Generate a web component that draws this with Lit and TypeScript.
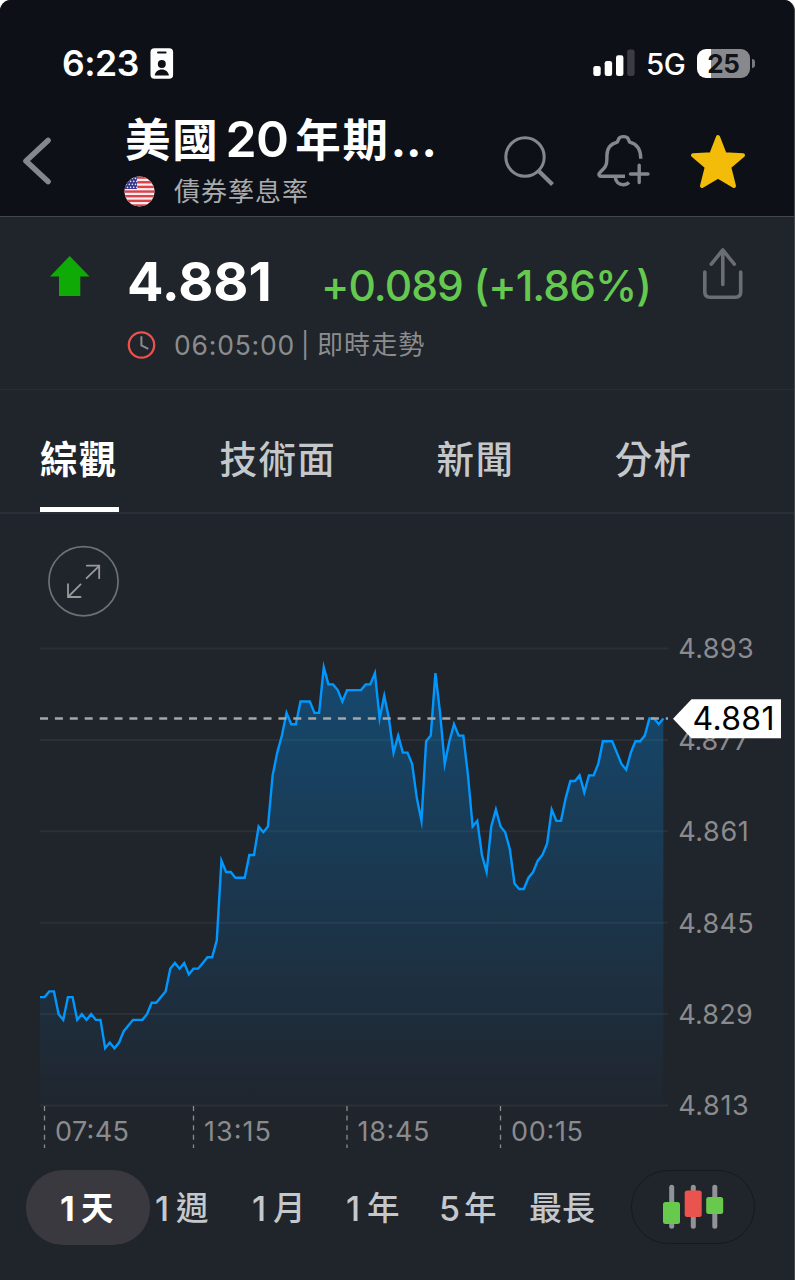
import { LitElement, html, svg, css } from "lit";
import { customElement, state } from "lit/decorators.js";
import { classMap } from "lit/directives/class-map.js";

// One sample per step, in thousandths above 4.813
const SAMPLES = [
  19, 19, 20, 20, 16, 15, 19, 19, 15, 16, 15, 16, 15, 15, 10, 11, 10, 11, 13, 14, 15, 15, 15, 16, 18, 18, 19, 20, 24,
  25, 24, 25, 23, 24, 24, 25, 26, 26, 29, 43, 41, 41, 40, 40, 40, 44, 44, 49, 48, 49, 58, 62, 65, 69, 67, 67, 71, 71,
  71, 69, 69, 77, 74, 74, 73, 71, 73, 73, 73, 73, 74, 74, 76, 68, 72, 68, 62, 65, 62, 62, 60, 54, 50, 64, 65, 76, 69,
  60, 64, 67, 65, 65, 58, 49, 50, 44, 41, 49, 52, 49, 48, 45, 39, 38, 38, 40, 41, 43, 44, 46, 52, 50, 50, 54, 57, 57,
  58, 55, 58, 58, 60, 64, 64, 64, 62, 60, 59, 62, 64, 64, 65, 68, 68, 67, 68,
];

const PLOT_LEFT = 40;
const STEP = 4.652;
const BASE_Y = 591.1;
const UNIT = 5.685;

@customElement("price-chart")
export class PriceChart extends LitElement {
  static styles = css`
    :host { display: block; }
    .chart { display: block; }
    .axis { font: 400 27px Inter, "Liberation Sans", sans-serif; fill: #8b8b8d; }
    .current { font: 400 32px Inter, "Liberation Sans", sans-serif; fill: #000; }
  `;

  render() {
    const pts = SAMPLES.map((k, i) => `${(PLOT_LEFT + i * STEP).toFixed(2)},${(BASE_Y - k * UNIT).toFixed(2)}`);
    const end = (PLOT_LEFT + (SAMPLES.length - 1) * STEP).toFixed(2);
    const levels: [string, number, number][] = [
      ["4.893", 134.5, 75.5], ["4.877", 226, 70.5], ["4.861", 317.2, 70.5],
      ["4.845", 408.8, 75.5], ["4.829", 500, 74.5], ["4.813", 591.5, 70.5],
    ];
    const times: [string, number, number][] = [
      ["07:45", 44.5, 74], ["13:15", 193.5, 67], ["18:45", 347, 72], ["00:15", 500.5, 72],
    ];
    return html`
      <svg class="chart" width="795" height="650" viewBox="0 0 795 650">
        <defs>
          <linearGradient id="area" x1="0" y1="147" x2="0" y2="591" gradientUnits="userSpaceOnUse">
            <stop offset="0" stop-color="#0090f0" stop-opacity="0.35" />
            <stop offset="1" stop-color="#0090f0" stop-opacity="0.015" />
          </linearGradient>
        </defs>
        <g fill="none" stroke="#6d7074" stroke-width="1.7">
          <circle cx="83.5" cy="67.2" r="34.6" />
          <g stroke="#98999b" stroke-width="1.8" stroke-linecap="round">
            <path d="M86.6 64.2 99.3 51.8M86.8 51.7H99.2V64.2" />
            <path d="M80.6 70.4 68 83M68 70.2V83H80.5" />
          </g>
        </g>
        ${levels.map(([, y]) => svg`<path d="M40 ${y}H668" stroke="#2b2f36" stroke-width="2" />`)}
        <polygon points="${PLOT_LEFT},591 ${pts.join(" ")} ${end},591" fill="url(#area)" />
        <polyline points=${pts.join(" ")} fill="none" stroke="#0098ff" stroke-width="2.4" stroke-miterlimit="10" />
        <path d="M40 204.4H668" stroke="#a4a6a7" stroke-width="2.5" stroke-dasharray="8 6.9" />
        ${levels.map(
          ([t, y, w]) => svg`<text class="axis" x="678.2" y=${y + 9.8} textLength=${w} lengthAdjust="spacing">${t}</text>`
        )}
        ${times.map(
          ([t, x, w]) => svg`
            <path d="M${x} 592V634" stroke="#8b8b8d" stroke-width="1.3" stroke-dasharray="5 4.6" />
            <text class="axis" x=${x + 10.5} y="627" textLength=${w} lengthAdjust="spacing">${t}</text>`
        )}
        <path d="M673 204.7 691.5 185.3H781V224.3H691.5Z" fill="#fff" />
        <text class="current" x="692.5" y="215.6" textLength="82" lengthAdjust="spacing">4.881</text>
      </svg>
    `;
  }
}

@customElement("app-root")
export class AppRoot extends LitElement {
  @state() private tab = 0;
  @state() private range = 0;

  static styles = css`
    :host {
      display: block;
      width: 795px;
      height: 1280px;
      overflow: hidden;
      background: #fff;
      font-family: Inter, "Noto Sans CJK TC", sans-serif;
      color: #fff;
    }
    * { box-sizing: border-box; }
    svg { display: block; flex: none; }
    .screen {
      display: flex;
      flex-direction: column;
      height: 1280px;
      border-radius: 11px 11px 0 0;
      overflow: hidden;
      background: #20242b;
      border-right: 1px solid #45484c;
    }
    .head { height: 217px; background: #0d1017; border-bottom: 1px solid #44474b; }
    .status { display: flex; align-items: center; height: 64px; padding: 0 39px 0 62px; margin-top: 31px; }
    .clock { font-size: 35.5px; font-weight: 600; line-height: 40px; letter-spacing: -0.5px; width: 88px; margin-top: 1px; white-space: nowrap; }
    .push { margin-left: auto; }
    .net { font-size: 29.5px; font-weight: 500; line-height: 40px; letter-spacing: -0.5px; margin: 2px 0 0 11px; width: 51px; white-space: nowrap; }
    .battery { display: flex; align-items: center; }
    .cell {
      width: 53px; height: 29px; border-radius: 9px; color: #101319;
      background: linear-gradient(90deg, #fff 14px, #88898c 14px);
      font-size: 26px; font-weight: 700; line-height: 30px; text-align: center; letter-spacing: -0.3px;
    }
    .nub { width: 3px; height: 9px; margin-left: 2px; border-radius: 0 4px 4px 0; background: #77797c; }
    .nav { display: flex; height: 121px; padding-left: 23px; }
    .back { margin-top: 42px; }
    .names { flex: none; width: 330px; margin-left: 73px; }
    .title { display: flex; align-items: baseline; height: 64px; font-size: 45.5px; font-weight: 700; line-height: 64px; margin-top: 12px; white-space: nowrap; padding-left: 1px; }
    .t-cjk { letter-spacing: 1.8px; }
    .t-num { font-size: 50px; font-weight: 600; letter-spacing: -0.8px; margin: 0 7px 0 6px; }
    .t-dots { font-size: 46px; letter-spacing: 0; margin-left: 1px; }
    .subtitle { display: flex; align-items: center; gap: 19px; height: 36px; margin-top: 2px; }
    .kind { font-size: 26px; line-height: 36px; letter-spacing: 1px; color: #a9abad; font-weight: 400; padding-top: 1px; }
    .search { margin: 40px 0 0 50px; }
    .bell { margin: 38px 0 0 42px; }
    .star { margin: 38px 0 0 40px; }
    .quote { height: 173px; border-bottom: 1px solid #282c33; padding: 0 50px 0 50px; }
    .price-row { display: flex; height: 99px; }
    .up { margin-top: 39px; }
    .price { font-size: 54px; font-weight: 700; line-height: 60px; margin: 35px 0 0 37px; width: 194px; letter-spacing: 0; white-space: nowrap; }
    .change { font-size: 42.5px; font-weight: 500; line-height: 60px; color: #65c950; margin-top: 39px; width: 381px; letter-spacing: -0.9px; white-space: nowrap; }
    .share { margin-top: 29px; }
    .time-row { display: flex; align-items: center; height: 58px; padding-left: 77px; }
    .time { font-size: 26.5px; color: #8b8c8e; margin-left: 18px; line-height: 36px; display: flex; white-space: nowrap; }
    .digits { letter-spacing: 0.8px; width: 127px; }
    .bar { width: 16px; font-size: 25px; }
    .live { font-size: 26px; letter-spacing: 1.1px; }
    .tabs { display: flex; height: 124px; padding-left: 40px; border-bottom: 2px solid #2a2e36; }
    .tab {
      display: block; font: inherit; background: none; border: 0; border-bottom: 5px solid transparent; padding: 0; color: #c5c8cb;
      font-size: 37.5px; font-weight: 500; line-height: 139px; height: 122px; letter-spacing: 1.3px;
      text-align: left; white-space: nowrap;
    }
    .label { display: block; height: 117px; overflow: hidden; }
    .tab.on { color: #fff; font-weight: 700; border-bottom-color: #fff; width: 79px; }
    .tab + .tab { margin-left: 100.6px; }
    .ranges { display: flex; margin-top: 6px; height: 75px; padding-left: 26px; }
    .range {
      font: inherit; background: none; border: 0; padding: 0; color: #c5c8cb;
      font-size: 33px; font-weight: 500; line-height: 77px; height: 75px; white-space: nowrap;
      display: flex; gap: 5px; text-align: left;
    }
    .range.on { color: #fff; font-weight: 700; background: #39393f; border-radius: 37px; }
    .u { font-size: 32.5px; }
    .n { width: 16px; font-size: 34px; }
    .n5 { width: 22px; font-size: 34px; }
    .r0 { width: 124px; padding-left: 34px; }
    .r1 { width: 96px; padding-left: 5px; }
    .r2 { width: 94px; padding-left: 6px; }
    .r3 { width: 94px; padding-left: 6px; }
    .r4 { width: 95px; padding-left: 5px; gap: 3px; }
    .r5 { width: 102px; padding-left: 0; }
    .candles { font: inherit; background: none; padding: 0; width: 124px; height: 74px; border: 1px solid #17191d; border-radius: 37px; display: flex; justify-content: center; align-items: center; }
  `;

  private tabs = ["綜觀", "技術面", "新聞", "分析"];
  private ranges = [["1", "天"], ["1", "週"], ["1", "月"], ["1", "年"], ["5", "年"], ["", "最長"]];

  private flag() {
    return html`<svg width="31" height="31" viewBox="0 0 31 31">
      <defs><clipPath id="disc"><circle cx="15.5" cy="15.5" r="15" /></clipPath></defs>
      <g clip-path="url(#disc)">
        <rect width="31" height="31" fill="#f6eeee" />
        ${[0, 1, 2, 3, 4, 5, 6].map((i) => svg`<rect y=${0.4 + i * 4.65} width="31" height="2.4" fill="#dc4048" />`)}
        <rect width="13" height="13" fill="#35388d" />
        ${[0, 1, 2, 3].map((r) =>
          [0, 1, 2, 3].map((c) => svg`<circle cx=${2.2 + c * 3.1 + (r % 2) * 1.3} cy=${2.4 + r * 3} r="0.8" fill="#e2e2f2" />`)
        )}
      </g>
    </svg>`;
  }

  render() {
    return html`
      <div class="screen">
        <header class="head">
          <div class="status">
            <span class="clock">6:23</span>
            <svg width="24" height="31" viewBox="0 0 24 31">
              <rect x="0.5" y="0.3" width="22.6" height="30.4" rx="4" fill="#fff" />
              <rect x="7" y="3.4" width="9.6" height="2.2" rx="1.1" fill="#0d1017" />
              <circle cx="11.8" cy="16" r="4" fill="#0d1017" />
              <path d="M4.7 27.5C5.3 23.8 8 21.6 11.8 21.6S18.3 23.8 18.9 27.5Z" fill="#0d1017" />
            </svg>
            <svg class="push" width="42" height="28" viewBox="0 0 42 28">
              <rect x="0.3" y="17" width="7.4" height="10" rx="2.3" fill="#fff" />
              <rect x="11.7" y="12" width="7.4" height="15" rx="2.3" fill="#fff" />
              <rect x="23" y="6.3" width="7.4" height="20.7" rx="2.3" fill="#fff" />
              <rect x="34.2" y="0.4" width="7.4" height="26.6" rx="2.3" fill="#3b3d42" />
            </svg>
            <span class="net">5G</span>
            <span class="battery"><span class="cell">25</span><span class="nub"></span></span>
          </div>
          <div class="nav">
            <svg class="back" width="28" height="48" viewBox="0 0 28 48">
              <path d="M25 3.5 3 24 25 44.5" fill="none" stroke="#84878b" stroke-width="5.6" stroke-linecap="round" stroke-linejoin="round" />
            </svg>
            <div class="names">
              <div class="title">
                <span class="t-cjk">美國</span><span class="t-num">20</span><span class="t-cjk">年期</span><span class="t-dots">…</span>
              </div>
              <div class="subtitle">${this.flag()}<span class="kind">債券孳息率</span></div>
            </div>
            <svg class="search" width="51" height="52" viewBox="0 0 51 52">
              <g fill="none" stroke="#84878b">
                <circle cx="21" cy="22" r="19.2" stroke-width="3" />
                <path d="M34.7 36 48.5 49.5" stroke-width="4.2" />
              </g>
            </svg>
            <svg class="bell" width="53" height="55" viewBox="0 0 53 55">
              <g fill="none" stroke="#84878b" stroke-width="3.4" stroke-linecap="butt" stroke-linejoin="round">
                <path d="M28 43.2H4.2C1.8 43.2 1.2 41 3 39.4 7.5 35 9.9 33.2 9.9 26V22.8C9.9 16.2 13.3 11 20.2 9.2L21.6 6.2C22.6 2.8 30.3 2.8 31.3 6.2L32.7 9.2C39.8 11 43.8 16.2 43.8 25.8" />
                <path d="M18.2 44C18.7 48.9 22 51.7 26.2 51.7 28.6 51.7 30.6 50.9 32 49.3" />
                <path d="M33.5 41H51M42.2 32.3V49.5" stroke-linecap="round" />
              </g>
            </svg>
            <svg class="star" width="56" height="57" viewBox="0 0 56 57">
              <path d="M28 4 34.7 21.3 53 22.2 39.2 34 44 53 28 43.6 12 53 16.8 34 3 22.2 21.3 21.3Z" fill="#f2bc08" stroke="#f2bc08" stroke-width="4" stroke-linejoin="round" />
            </svg>
          </div>
        </header>

        <section class="quote">
          <div class="price-row">
            <svg class="up" width="40" height="41" viewBox="0 0 40 41"><path d="M19.7 0 39.5 20.6H30.3V40H9V20.6H0Z" fill="#0faa05" /></svg>
            <span class="price">4.881</span>
            <span class="change">+0.089 (+1.86%)</span>
            <svg class="share" width="42" height="54" viewBox="0 0 42 54">
              <g fill="none" stroke="#6a6d71" stroke-width="3.6" stroke-linecap="round" stroke-linejoin="round">
                <path d="M2.8 26V46Q2.8 51.2 8 51.2H33.5Q38.7 51.2 38.7 46V26" />
                <path d="M20.8 38.5V4M9.3 18.2 20.8 4 32.3 18.2" />
              </g>
            </svg>
          </div>
          <div class="time-row">
            <svg width="29" height="29" viewBox="0 0 29 29">
              <circle cx="14.5" cy="14" r="12.7" fill="none" stroke="#ee514d" stroke-width="2.3" />
              <path d="M14.4 5.2V14.5L21.3 17.9" fill="none" stroke="#8b8c8e" stroke-width="2" />
            </svg>
            <span class="time"><span class="digits">06:05:00</span><span class="bar">|</span><span class="live">即時走勢</span></span>
          </div>
        </section>

        <nav class="tabs">
          ${this.tabs.map(
            (t, i) => html`<button class=${classMap({ tab: true, on: this.tab === i })} @click=${() => (this.tab = i)}><span class="label">${t}</span></button>`
          )}
        </nav>

        <price-chart></price-chart>

        <div class="ranges">
          ${this.ranges.map(
            ([n, u], i) => html`<button class=${classMap({ range: true, [`r${i}`]: true, on: this.range === i })} @click=${() => (this.range = i)}>
              ${n ? html`<span class=${n === "5" ? "n5" : "n"}>${n}</span>` : ""}<span class=${n ? "u" : ""}>${u}</span>
            </button>`
          )}
          <button class="candles" aria-label="K">
            <svg width="61" height="46" viewBox="0 0 61 46">
              <g fill="#929396">
                <rect x="6.2" y="0.8" width="5" height="44" rx="2.5" /><rect x="27.8" y="0.8" width="5" height="44" rx="2.5" /><rect x="49.3" y="0.8" width="5" height="44" rx="2.5" />
              </g>
              <rect x="0" y="18" width="17" height="22" rx="2.5" fill="#68ca4d" />
              <rect x="21.7" y="6.5" width="17" height="26.5" rx="2.5" fill="#ea534e" />
              <rect x="43.2" y="13" width="17" height="17" rx="2.5" fill="#68ca4d" />
            </svg>
          </button>
        </div>
      </div>
    `;
  }
}
